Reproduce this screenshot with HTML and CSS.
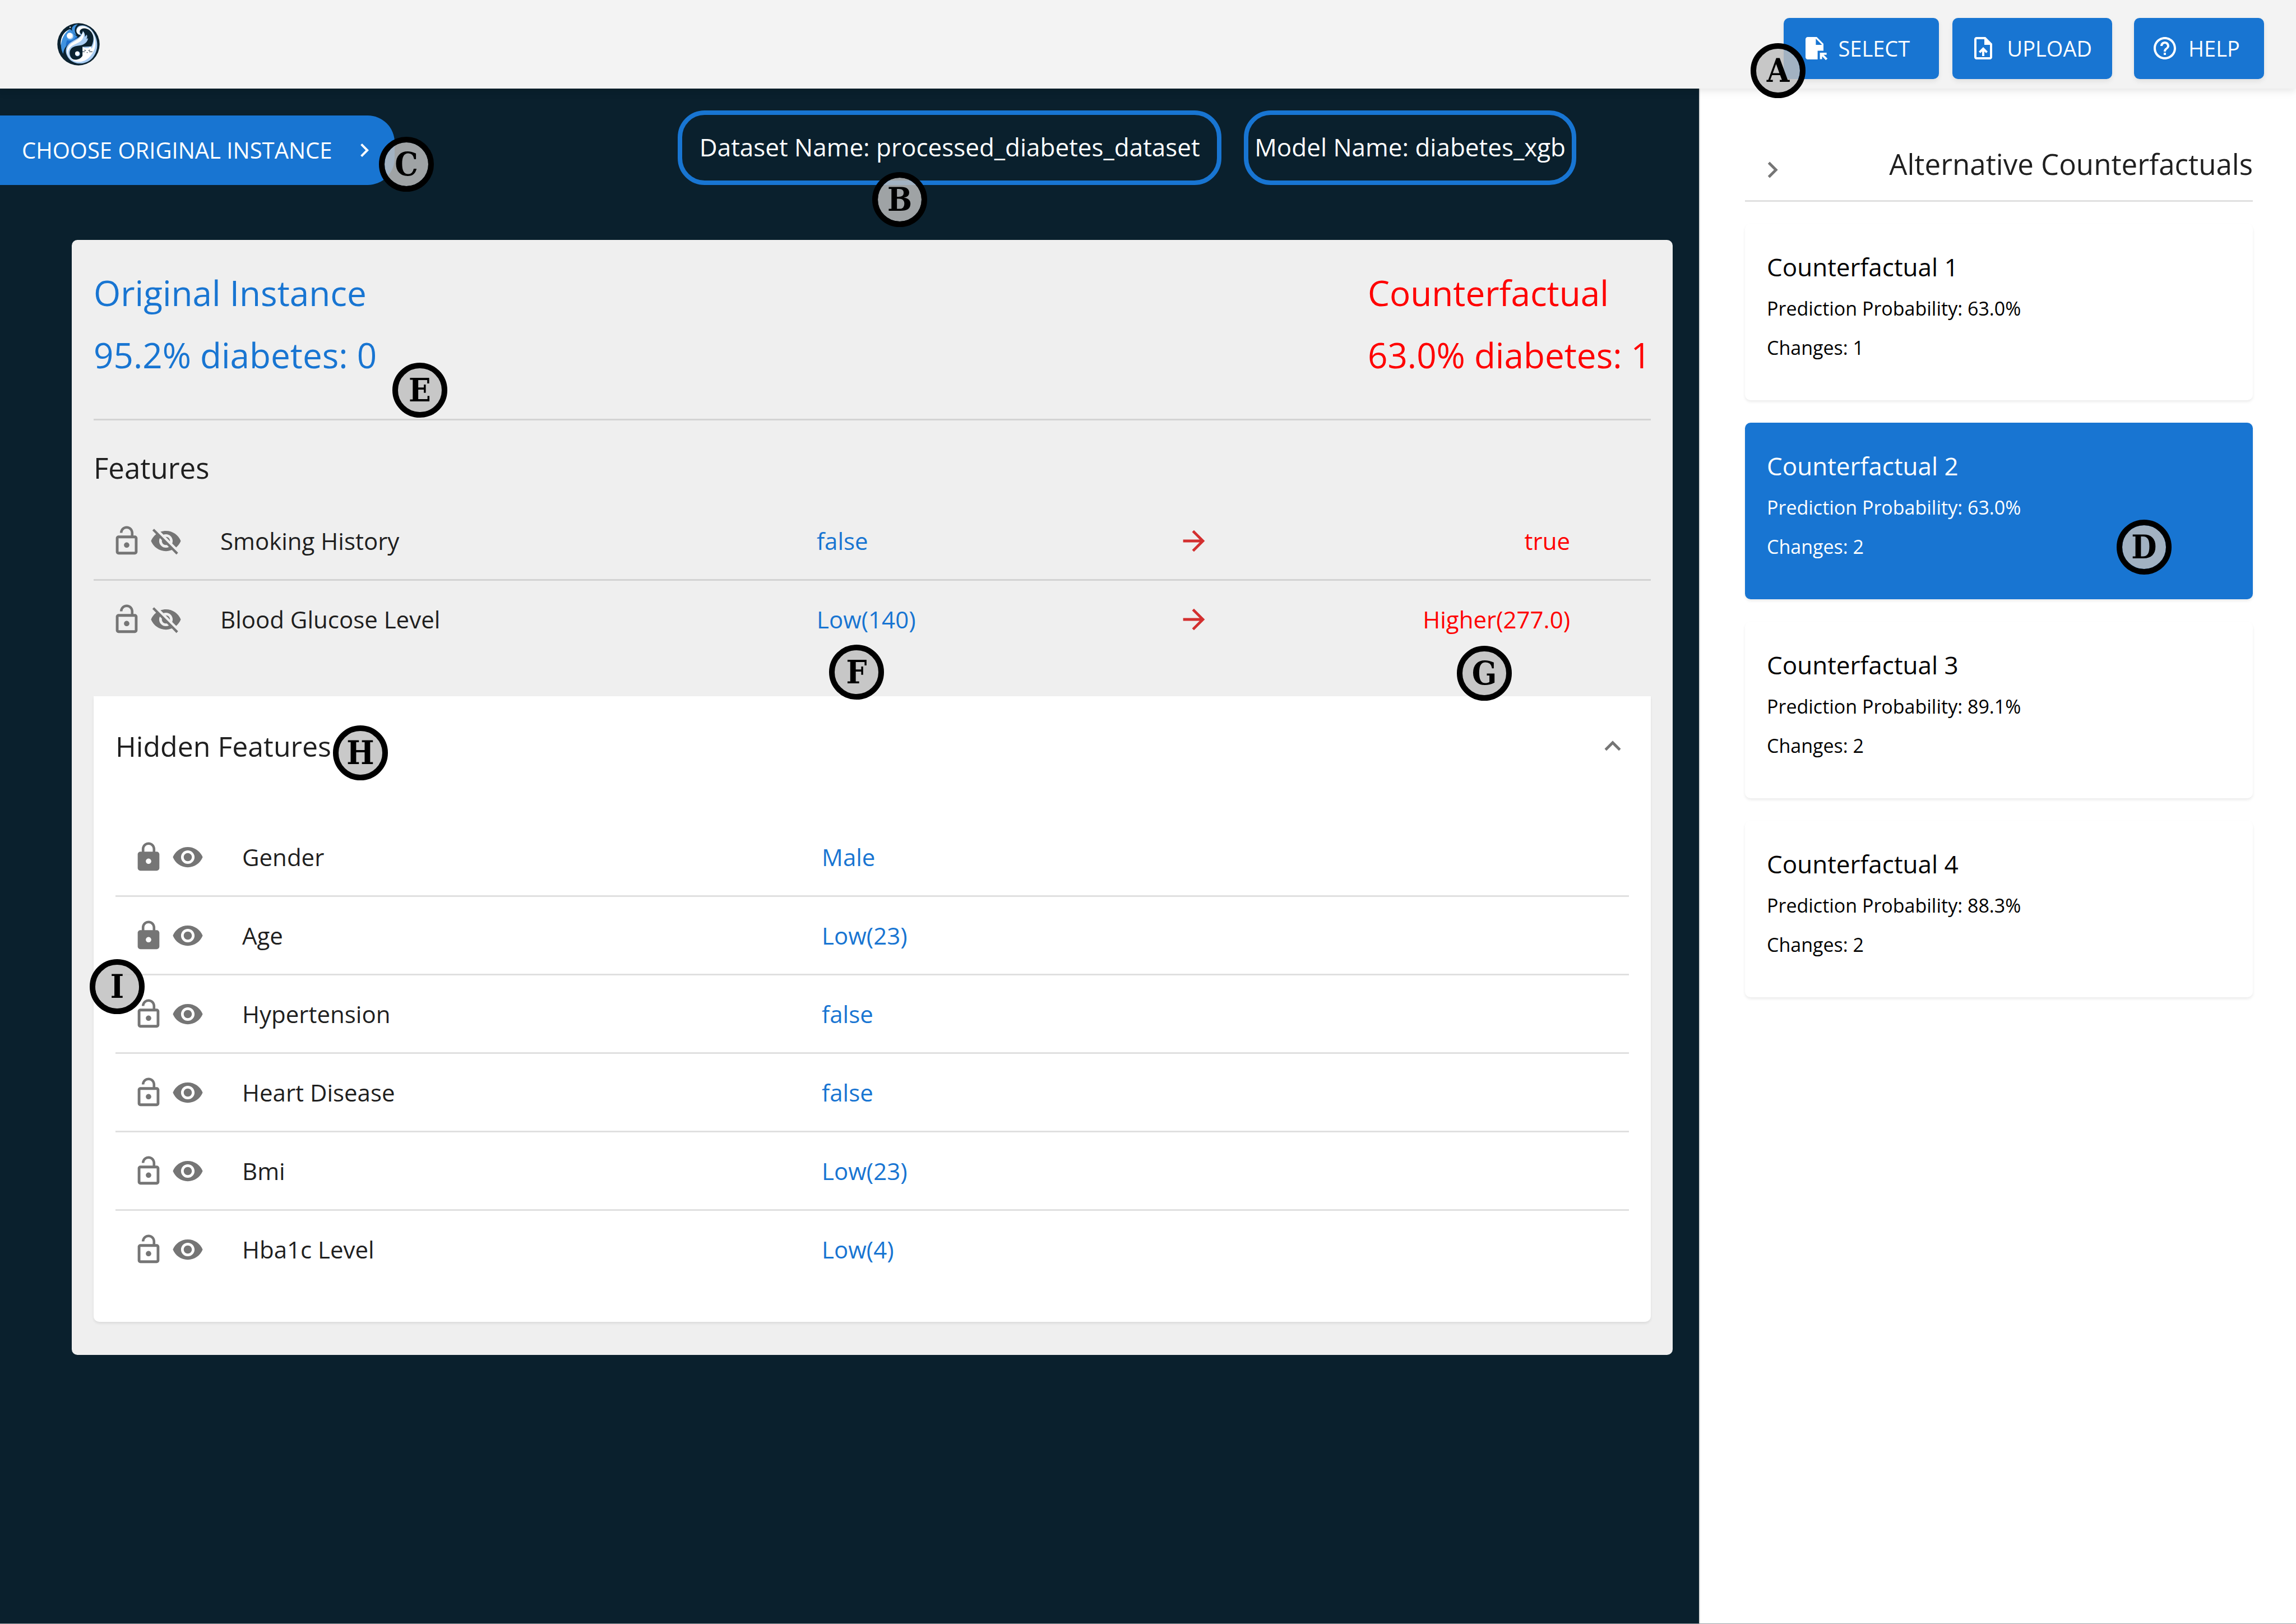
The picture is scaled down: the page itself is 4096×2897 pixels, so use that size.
FILE: index.html
```html
<!DOCTYPE html>
<html lang="en">
<head>
<meta charset="utf-8">
<title>Counterfactual Explorer</title>
<link rel="stylesheet" href="styles.css">
</head>
<body>
<svg class="sprite" aria-hidden="true">
  <symbol id="i-lock" viewBox="0 0 24 24"><path d="M18 8h-1V6c0-2.760-2.240-5-5-5S7 3.240 7 6v2H6c-1.100 0-2 .9-2 2v10c0 1.100.9 2 2 2h12c1.100 0 2-.9 2-2V10c0-1.100-.9-2-2-2zm-6 9c-1.100 0-2-.9-2-2s.9-2 2-2 2 .9 2 2-.9 2-2 2zm3.100-9H8.900V6c0-1.710 1.390-3.100 3.100-3.100s3.100 1.390 3.100 3.100v2z"/></symbol>
  <symbol id="i-unlock" viewBox="0 0 24 24"><path d="M12 17c1.100 0 2-.9 2-2s-.9-2-2-2-2 .9-2 2 .9 2 2 2zm6-9h-1V6c0-2.760-2.240-5-5-5S7 3.240 7 6h1.900c0-1.710 1.390-3.100 3.100-3.100s3.100 1.390 3.100 3.100v2H6c-1.100 0-2 .9-2 2v10c0 1.100.9 2 2 2h12c1.100 0 2-.9 2-2V10c0-1.100-.9-2-2-2zm0 12H6V10h12v10z"/></symbol>
  <symbol id="i-eye" viewBox="0 0 24 24"><path d="M12 4.500C7 4.500 2.730 7.610 1 12c1.730 4.390 6 7.500 11 7.500s9.270-3.110 11-7.500c-1.730-4.390-6-7.500-11-7.500zM12 17c-2.760 0-5-2.240-5-5s2.240-5 5-5 5 2.240 5 5-2.240 5-5 5zm0-8c-1.660 0-3 1.340-3 3s1.340 3 3 3 3-1.340 3-3-1.340-3-3-3z"/></symbol>
  <symbol id="i-eye-off" viewBox="0 0 24 24"><path d="M12 7c2.760 0 5 2.240 5 5 0 .65-.13 1.260-.36 1.830l2.920 2.920c1.510-1.260 2.700-2.890 3.430-4.750-1.730-4.390-6-7.500-11-7.500-1.400 0-2.740.25-3.980.7l2.160 2.160C10.740 7.130 11.350 7 12 7zM2 4.270l2.280 2.280.46.46C3.080 8.300 1.780 10.020 1 12c1.730 4.390 6 7.500 11 7.500 1.550 0 3.030-.3 4.380-.84l.42.42L19.730 22 21 20.730 3.270 3 2 4.270zM7.530 9.800l1.550 1.550c-.05.21-.08.43-.08.65 0 1.660 1.340 3 3 3 .22 0 .44-.03.65-.08l1.550 1.550c-.67.33-1.410.53-2.200.53-2.760 0-5-2.240-5-5 0-.79.2-1.530.53-2.200zm4.310-.78l3.150 3.150.02-.16c0-1.660-1.340-3-3-3l-.17.01z"/></symbol>
  <symbol id="i-right" viewBox="0 0 24 24"><path d="M10 6 8.590 7.410 13.170 12l-4.580 4.590L10 18l6-6z"/></symbol>
  <symbol id="i-up" viewBox="0 0 24 24"><path d="m12 8-6 6 1.410 1.410L12 10.830l4.590 4.580L18 14z"/></symbol>
  <symbol id="i-arrow" viewBox="0 0 24 24"><path d="m12 4-1.410 1.410L16.170 11H4v2h12.170l-5.580 5.590L12 20l8-8z"/></symbol>
  <symbol id="i-file-select" viewBox="0 0 24 24"><path fill-rule="evenodd" d="M6 2h8l6 6v6.200h-5.200V22H6c-1.100 0-2-.9-2-2V4c0-1.100.9-2 2-2zm7.200 1.500V9h5.500z"/><path d="M16.800 16h6v1.900h-2.600l3.400 3.300-1.500 1.400-3.300-3.300v2.500h-2z"/></symbol>
  <symbol id="i-file-upload" viewBox="0 0 24 24"><path d="M14 2H6c-1.100 0-1.990.9-1.990 2L4 20c0 1.100.89 2 1.990 2H18c1.100 0 2-.9 2-2V8l-6-6zm4 18H6V4h7v5h5v11zM8 15.010l1.410 1.410L11 14.840V19h2v-4.160l1.590 1.590L16 15.010 12.010 11z"/></symbol>
  <symbol id="i-help" viewBox="0 0 24 24"><path d="M11 18h2v-2h-2v2zm1-16C6.480 2 2 6.480 2 12s4.480 10 10 10 10-4.480 10-10S17.520 2 12 2zm0 18c-4.410 0-8-3.590-8-8s3.590-8 8-8 8 3.590 8 8-3.590 8-8 8zm0-14c-2.210 0-4 1.790-4 4h2c0-1.100.9-2 2-2s2 .9 2 2c0 2-3 1.750-3 5h2c0-2.250 3-2.500 3-5 0-2.210-1.790-4-4-4z"/></symbol>
</svg>

<header class="topbar">
  <a class="logo" href="#" aria-label="Home">
    <svg viewBox="81 75 260 260" aria-hidden="true">
      <circle cx="211" cy="205" r="129" fill="#0b2230"/>
      <path fill="#3f92e0" d="M160 113C124 128 98 165 104 214c2 22 7 36 14 49 2-34 26-60 52-76 20-12 33-20 35-28-14-8-24-20-32-36z"/>
      <path fill="#1b6ccc" d="M142 180c20 8 40 2 54-20l10 0c-6 14-24 22-40 32-12 8-24 16-32 28 0-14 2-28 8-40z"/>
      <path fill="#fff" d="M160 113c-36 12-62 50-56 98 4-36 18-74 56-98z"/>
      <path fill="#3f92e0" d="M207 83c-28 2-44 22-32 44 6 12 14 18 24 24-16-26-14-50 8-68z"/>
      <circle cx="160" cy="155" r="20" fill="#b5d4f5"/>
      <circle cx="157" cy="152" r="17" fill="#fff"/>
      <circle cx="160" cy="101" r="4" fill="#fff"/>
      <path fill="#a9cdf3" d="M232 148C198 152 188 116 208 98c24-18 64-6 88 26 40 54 38 120 2 162-36 44-104 48-140 12-30-32-34-74 2-102 32-24 68-30 78-72 12 12 14 24 12 36l12-14c4 12 2 18-2 26l10-4c-6 32-34 44-66 46-36 4-54 28-44 60 12 34 54 38 76 8V220l54-2c22-42 12-84-12-104-22-16-48-16-56 0-6 12-2 24 10 34z"/>
      <path fill="#fff" d="M222 146C196 142 194 116 210 102c24-16 58-4 82 24 34 48 28 110-6 148-34 44-92 50-124 18-28-30-28-66 4-92 34-22 66-34 74-72 8 22 2 42-16 58-18 14-36 18-52 28-26 18-30 46-16 66 20 28 62 24 80-6V220l14 8h22l12-10 8 14c26-46 14-88-12-112-22-18-50-16-60 0-6 10-4 20 2 26z"/>
      <path fill="#0b2230" d="m247 238 10 4-2 3-9-3zm34 0-10 4 2 3 9-3zm-21 16h8l-4 5zM230 249h20v3h-20zm46 0h20v3h-20z"/>
      <circle cx="205" cy="263" r="15" fill="#b5d4f5"/>
      <circle cx="203" cy="261" r="12" fill="#fff"/>
    </svg>
  </a>
  <nav class="topbar-actions">
    <button class="btn" type="button"><svg aria-hidden="true"><use href="#i-file-select"/></svg>SELECT</button>
    <button class="btn" type="button"><svg aria-hidden="true"><use href="#i-file-upload"/></svg>UPLOAD</button>
    <button class="btn btn-help" type="button"><svg aria-hidden="true"><use href="#i-help"/></svg>HELP</button>
  </nav>
</header>

<div class="layout">
  <main class="workspace">
    <div class="toolbar">
      <button class="choose" type="button">CHOOSE ORIGINAL INSTANCE<svg aria-hidden="true"><use href="#i-right"/></svg></button>
      <div class="chips">
        <div class="chip chip-wide">Dataset Name: processed_diabetes_dataset</div>
        <div class="chip">Model Name: diabetes_xgb</div>
      </div>
    </div>

    <section class="card">
      <div class="summary">
        <h1 class="original">Original Instance<br>95.2% diabetes: 0</h1>
        <h1 class="counter">Counterfactual<br>63.0% diabetes: 1</h1>
      </div>

      <h2 class="section-title">Features</h2>
      <table class="features">
        <colgroup><col class="c-actions"><col class="c-name"><col class="c-value"><col class="c-arrow"><col></colgroup>
        <tbody>
          <tr>
            <td><div class="actions"><button type="button" aria-label="Lock"><svg><use href="#i-unlock"/></svg></button><button type="button" aria-label="Hide"><svg><use href="#i-eye-off"/></svg></button></div></td>
            <th scope="row">Smoking History</th><td class="original">false</td>
            <td class="arrow"><svg aria-hidden="true"><use href="#i-arrow"/></svg></td><td class="new-value">true</td>
          </tr>
          <tr>
            <td><div class="actions"><button type="button" aria-label="Lock"><svg><use href="#i-unlock"/></svg></button><button type="button" aria-label="Hide"><svg><use href="#i-eye-off"/></svg></button></div></td>
            <th scope="row">Blood Glucose Level</th><td class="original">Low(140)</td>
            <td class="arrow"><svg aria-hidden="true"><use href="#i-arrow"/></svg></td><td class="new-value">Higher(277.0)</td>
          </tr>
        </tbody>
      </table>

      <section class="hidden-panel">
        <button class="panel-toggle" type="button" aria-expanded="true">Hidden Features<svg aria-hidden="true"><use href="#i-up"/></svg></button>
        <table class="features">
          <colgroup><col class="c-actions"><col class="c-name"><col></colgroup>
          <tbody>
            <tr><td><div class="actions"><button type="button" aria-label="Unlock"><svg><use href="#i-lock"/></svg></button><button type="button" aria-label="Show"><svg><use href="#i-eye"/></svg></button></div></td><th scope="row">Gender</th><td class="original">Male</td></tr>
            <tr><td><div class="actions"><button type="button" aria-label="Unlock"><svg><use href="#i-lock"/></svg></button><button type="button" aria-label="Show"><svg><use href="#i-eye"/></svg></button></div></td><th scope="row">Age</th><td class="original">Low(23)</td></tr>
            <tr><td><div class="actions"><button type="button" aria-label="Lock"><svg><use href="#i-unlock"/></svg></button><button type="button" aria-label="Show"><svg><use href="#i-eye"/></svg></button></div></td><th scope="row">Hypertension</th><td class="original">false</td></tr>
            <tr><td><div class="actions"><button type="button" aria-label="Lock"><svg><use href="#i-unlock"/></svg></button><button type="button" aria-label="Show"><svg><use href="#i-eye"/></svg></button></div></td><th scope="row">Heart Disease</th><td class="original">false</td></tr>
            <tr><td><div class="actions"><button type="button" aria-label="Lock"><svg><use href="#i-unlock"/></svg></button><button type="button" aria-label="Show"><svg><use href="#i-eye"/></svg></button></div></td><th scope="row">Bmi</th><td class="original">Low(23)</td></tr>
            <tr><td><div class="actions"><button type="button" aria-label="Lock"><svg><use href="#i-unlock"/></svg></button><button type="button" aria-label="Show"><svg><use href="#i-eye"/></svg></button></div></td><th scope="row">Hba1c Level</th><td class="original">Low(4)</td></tr>
          </tbody>
        </table>
      </section>
    </section>
  </main>

  <aside class="sidebar">
    <div class="sidebar-head">
      <button type="button" aria-label="Collapse"><svg><use href="#i-right"/></svg></button>
      <h2>Alternative Counterfactuals</h2>
    </div>
    <div class="options">
      <button class="option" type="button"><strong>Counterfactual 1</strong><span>Prediction Probability: 63.0%</span><span>Changes: 1</span></button>
      <button class="option selected" type="button" aria-pressed="true"><strong>Counterfactual 2</strong><span>Prediction Probability: 63.0%</span><span>Changes: 2</span></button>
      <button class="option" type="button"><strong>Counterfactual 3</strong><span>Prediction Probability: 89.1%</span><span>Changes: 2</span></button>
      <button class="option" type="button"><strong>Counterfactual 4</strong><span>Prediction Probability: 88.3%</span><span>Changes: 2</span></button>
    </div>
  </aside>
</div>

<span class="pin pin-a">A</span>
<span class="pin pin-b">B</span>
<span class="pin pin-c">C</span>
<span class="pin pin-d">D</span>
<span class="pin pin-e">E</span>
<span class="pin pin-f">F</span>
<span class="pin pin-g">G</span>
<span class="pin pin-h">H</span>
<span class="pin pin-i">I</span>
</body>
</html>
```
FILE: styles.css
```css
:root {
  --blue: #1875d2;
  --red: #ff0000;
  --ink: #1f1f1f;
  --grey: #757575;
  --night: #0a202d;
  --icon: 58px;
}

* { box-sizing: border-box; }

body {
  margin: 0;
  min-height: 100vh;
  position: relative;
  display: flex;
  flex-direction: column;
  border-bottom: 1px solid #9aa0a5;
  background: #fff;
  color: var(--ink);
  font-family: "Open Sans", "Noto Sans", sans-serif;
  font-size: 42px;
  line-height: 60px;
}

h1, h2 { margin: 0; font-weight: 400; }

button {
  margin: 0;
  padding: 0;
  border: 0;
  background: none;
  color: inherit;
  font: inherit;
  cursor: pointer;
}

svg {
  display: block;
  flex: none;
  width: var(--icon);
  height: var(--icon);
  fill: currentColor;
}

.sprite { position: absolute; width: 0; height: 0; }

/* Top bar */
.topbar {
  position: relative;
  z-index: 1;
  height: 158px;
  padding: 0 57px 0 102px;
  display: flex;
  align-items: center;
  justify-content: space-between;
  background: #f3f3f3;
  box-shadow: 0 4px 10px rgba(0, 0, 0, .06), 0 10px 14px rgba(0, 0, 0, .03);
}

.logo svg { width: 76px; height: 76px; }

.topbar-actions {
  display: flex;
  gap: 24px;
  padding-top: 14px;
}

.btn {
  --icon: 48px;
  min-width: 277px;
  height: 109px;
  padding: 0 36px 0 31px;
  display: flex;
  align-items: center;
  gap: 18px;
  border-radius: 10px;
  background: var(--blue);
  color: #fff;
  font-size: 38px;
  box-shadow: 0 4px 8px rgba(0, 0, 0, .08);
}

.btn-help { min-width: 232px; margin-left: 15px; }

/* Page columns */
.layout {
  flex: 1;
  display: grid;
  grid-template-columns: 74% 26%;
}

.workspace { background: var(--night); }

.toolbar {
  padding: 39px 219px 0 0;
  display: flex;
  align-items: flex-end;
  justify-content: space-between;
}

.choose {
  --icon: 48px;
  min-width: 704px;
  height: 124px;
  padding: 0 30px 0 39px;
  display: flex;
  align-items: center;
  justify-content: space-between;
  border-radius: 0 48px 48px 0;
  background: var(--blue);
  color: #fff;
  font-size: 40px;
}

.chips { display: flex; gap: 40px; }

.chip {
  height: 133px;
  padding: 0 11px 3px;
  display: flex;
  align-items: center;
  justify-content: center;
  border: 8px solid var(--blue);
  border-radius: 48px;
  color: #fff;
  font-size: 44px;
}

.chip-wide { min-width: 970px; }

/* Comparison card */
.card {
  margin: 98px 47px 0 128px;
  padding: 39px 39px 59px;
  border-radius: 10px;
  background: #efefef;
}

.summary {
  padding-bottom: 58px;
  display: flex;
  justify-content: space-between;
  border-bottom: 3px solid #d3d3d3;
}

.summary h1 { font-size: 62px; line-height: 111px; }

.original { color: var(--blue); }
.counter, .new-value { color: var(--red); }

.section-title {
  padding: 45px 0 23px;
  font-size: 51px;
  line-height: 78px;
}

.features {
  width: 100%;
  table-layout: fixed;
  border-collapse: separate;
  border-spacing: 0;
}

.features td, .features th {
  height: 140px;
  padding: 0;
  border-bottom: 3px solid #d3d3d3;
  font-weight: 400;
  text-align: left;
  vertical-align: middle;
}

.features tr:last-child > * { border-bottom-color: transparent; }

.c-actions { width: 226px; }
.c-name { width: 38.3%; }
.c-value { width: 23.2%; }
.c-arrow { width: 58px; }

.actions {
  padding-left: 30px;
  display: flex;
  gap: 12px;
  color: var(--grey);
}

.features .arrow { color: #d32f2f; }
.features .new-value { padding-right: 144px; text-align: right; }

/* Hidden features */
.hidden-panel {
  margin-top: 66px;
  padding: 0 39px 58px;
  border-radius: 0 0 10px 10px;
  background: #fff;
  box-shadow: 0 3px 4px rgba(0, 0, 0, .08);
}

.hidden-panel .features td, .hidden-panel .features th { border-bottom-color: #e0e0e0; }
.hidden-panel .features tr:last-child > * { border-bottom-color: transparent; }

.panel-toggle {
  width: 100%;
  height: 178px;
  margin-bottom: 40px;
  display: flex;
  align-items: center;
  justify-content: space-between;
  font-size: 50px;
}

.panel-toggle svg { color: var(--grey); }

/* Sidebar */
.sidebar {
  padding: 0 77px 80px 80px;
  border-left: 2px solid #dcdcdc;
  background: #fff;
}

.sidebar-head {
  height: 202px;
  padding: 68px 0 0 20px;
  display: flex;
  align-items: center;
  justify-content: space-between;
  border-bottom: 3px solid #e0e0e0;
}

.sidebar-head button { padding-top: 22px; color: var(--grey); }
.sidebar-head h2 { font-size: 51px; }

.options {
  margin-top: 39px;
  display: grid;
  gap: 40px;
}

.option {
  padding: 39px 39px 59px;
  display: flex;
  flex-direction: column;
  text-align: left;
  border-radius: 10px;
  background: #fff;
  color: #000;
  font-size: 34px;
  line-height: 70px;
  box-shadow: 0 3px 5px rgba(0, 0, 0, .08);
}

.option strong { font-size: 44px; font-weight: 400; line-height: 77px; }
.option.selected { background: var(--blue); color: #fff; }

/* Annotation pins laid over the screen */
.pin {
  position: absolute;
  z-index: 2;
  width: 98px;
  height: 98px;
  display: flex;
  align-items: center;
  justify-content: center;
  border: 10px solid #000;
  border-radius: 50%;
  background: rgba(190, 190, 190, .83);
  background-clip: padding-box;
  color: #000;
  font-family: "DejaVu Serif Condensed", "DejaVu Serif", serif;
  font-size: 58px;
  font-weight: 700;
}

.pin-a { left: 3123px; top: 77px; }
.pin-b { left: 1556px; top: 307px; }
.pin-c { left: 676px; top: 244px; }
.pin-d { left: 3776px; top: 927px; }
.pin-e { left: 700px; top: 647px; }
.pin-f { left: 1479px; top: 1150px; }
.pin-g { left: 2599px; top: 1152px; }
.pin-h { left: 594px; top: 1294px; }
.pin-i { left: 160px; top: 1711px; }
```
